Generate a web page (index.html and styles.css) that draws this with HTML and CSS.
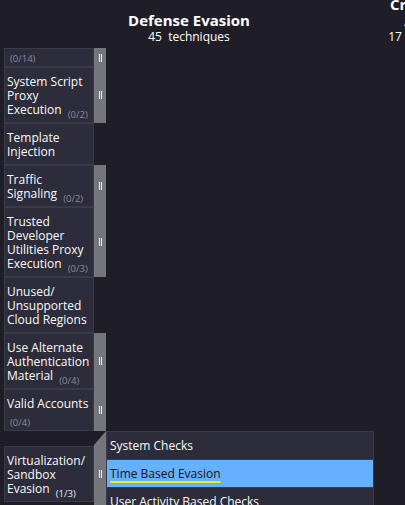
FILE: index.html
```html
<!DOCTYPE html>
<html lang="en">
<head>
<meta charset="utf-8">
<title>Defense Evasion</title>
<link rel="stylesheet" href="styles.css">
</head>
<body>
<div class="matrix">
  <section class="tactic tactic-main">
    <header class="tactic-header">
      <div class="tactic-name">Defense Evasion</div>
      <div class="tactic-count">45&nbsp; techniques</div>
    </header>
    <div class="techniques">
      <div class="row">
        <div class="cell cell-tail"><div class="tail-line"><span class="count">(0/14)</span></div></div>
        <div class="sidebar"><span class="grip"></span></div>
      </div>
      <div class="row">
        <div class="cell">System Script Proxy Execution <span class="count">(0/2)</span></div>
        <div class="sidebar"><span class="grip"></span></div>
      </div>
      <div class="row">
        <div class="cell">Template Injection</div>
        <div class="no-sidebar"></div>
      </div>
      <div class="row">
        <div class="cell">Traffic Signaling <span class="count">(0/2)</span></div>
        <div class="sidebar"><span class="grip"></span></div>
      </div>
      <div class="row">
        <div class="cell">Trusted Developer Utilities Proxy Execution <span class="count">(0/3)</span></div>
        <div class="sidebar"><span class="grip"></span></div>
      </div>
      <div class="row">
        <div class="cell">Unused/<wbr>Unsupported Cloud Regions</div>
        <div class="no-sidebar"></div>
      </div>
      <div class="row">
        <div class="cell">Use Alternate Authentication Material <span class="count">(0/4)</span></div>
        <div class="sidebar"><span class="grip"></span></div>
      </div>
      <div class="row">
        <div class="cell">Valid Accounts <span class="count">(0/4)</span></div>
        <div class="sidebar"><span class="grip"></span></div>
      </div>
      <div class="row row-expanded">
        <div class="cell">Virtualization/<wbr>Sandbox Evasion <span class="count count-active">(1/3)</span></div>
        <div class="sidebar sidebar-open"><span class="grip"></span></div>
        <div class="subs">
          <div class="sub">System Checks</div>
          <div class="sub sub-selected"><span class="sub-mark">Time Based Evasion</span></div>
          <div class="sub">User Activity Based Checks</div>
        </div>
      </div>
    </div>
  </section>
  <section class="tactic tactic-next">
    <header class="tactic-header">
      <div class="tactic-name">Credential Access</div>
      <div class="tactic-count">17&nbsp; techniques</div>
    </header>
  </section>
</div>
</body>
</html>
```
FILE: styles.css
```css
html, body {
  margin: 0;
  padding: 0;
  width: 405px;
  height: 505px;
  overflow: hidden;
  background: #1f1e27;
}

body {
  font-family: "Open Sans", "Noto Sans", sans-serif;
  color: #fafafa;
}

.matrix {
  display: flex;
  align-items: flex-start;
  width: max-content;
  padding-left: 4px;
}

.tactic {
  flex-shrink: 0;
  display: flex;
  flex-direction: column;
}

.tactic-main {
  width: 370px;
}

.tactic-next {
  width: 104px;
  margin-left: 3px;
}

.tactic-header {
  height: 45px;
  margin-bottom: 3px;
  display: flex;
  flex-direction: column;
  justify-content: flex-end;
  text-align: center;
  color: #ffffff;
}

.tactic-name {
  font-size: 15px;
  font-weight: 700;
  line-height: 16px;
}

.tactic-count {
  font-size: 12px;
  line-height: 17px;
}

.techniques {
  display: flex;
  flex-direction: column;
}

.row {
  display: flex;
  align-items: stretch;
}

.cell {
  width: 90px;
  flex-shrink: 0;
  box-sizing: border-box;
  background: #2d2c3b;
  border: 1px solid #3b3a49;
  padding: 7px 1px 5px 2px;
  font-size: 12px;
  line-height: 14px;
  color: #fafafa;
}

.cell-tail {
  padding-top: 0;
  padding-bottom: 5px;
}

.tail-line {
  height: 14px;
  margin-top: -2px;
}

.count {
  margin-left: 3px;
  font-size: 9.5px;
  line-height: 0;
  vertical-align: -4px;
  color: #8c8b97;
}

.count-active {
  color: #ececec;
}

.sidebar {
  width: 12px;
  flex-shrink: 0;
  background: #73767a;
  display: flex;
  align-items: center;
  justify-content: center;
}

.no-sidebar {
  width: 12px;
  flex-shrink: 0;
}

.grip {
  display: block;
  width: 1px;
  height: 8px;
  border-left: 1px solid #ececec;
  border-right: 1px solid #ececec;
  margin-left: 1px;
}

.row-expanded {
  align-items: center;
}

.sidebar-open {
  align-self: stretch;
  clip-path: polygon(100% 0, 100% 100%, 0 100%, 0 14px);
}

.subs {
  width: 268px;
  flex-shrink: 0;
  box-sizing: border-box;
  background: #2d2c3b;
  border: 1px solid #3b3a49;
  border-bottom: none;
  display: flex;
  flex-direction: column;
}

.sub {
  height: 27px;
  border-bottom: 1px solid #3b3a49;
  display: flex;
  align-items: center;
  padding-left: 3px;
  font-size: 12px;
  line-height: 14px;
  color: #fafafa;
}

.sub-selected {
  background: #65b0ff;
  color: #141414;
}

.sub-mark {
  text-decoration: underline;
  text-decoration-color: #f6ee00;
  text-decoration-thickness: 2px;
  text-underline-offset: 3px;
}
```
